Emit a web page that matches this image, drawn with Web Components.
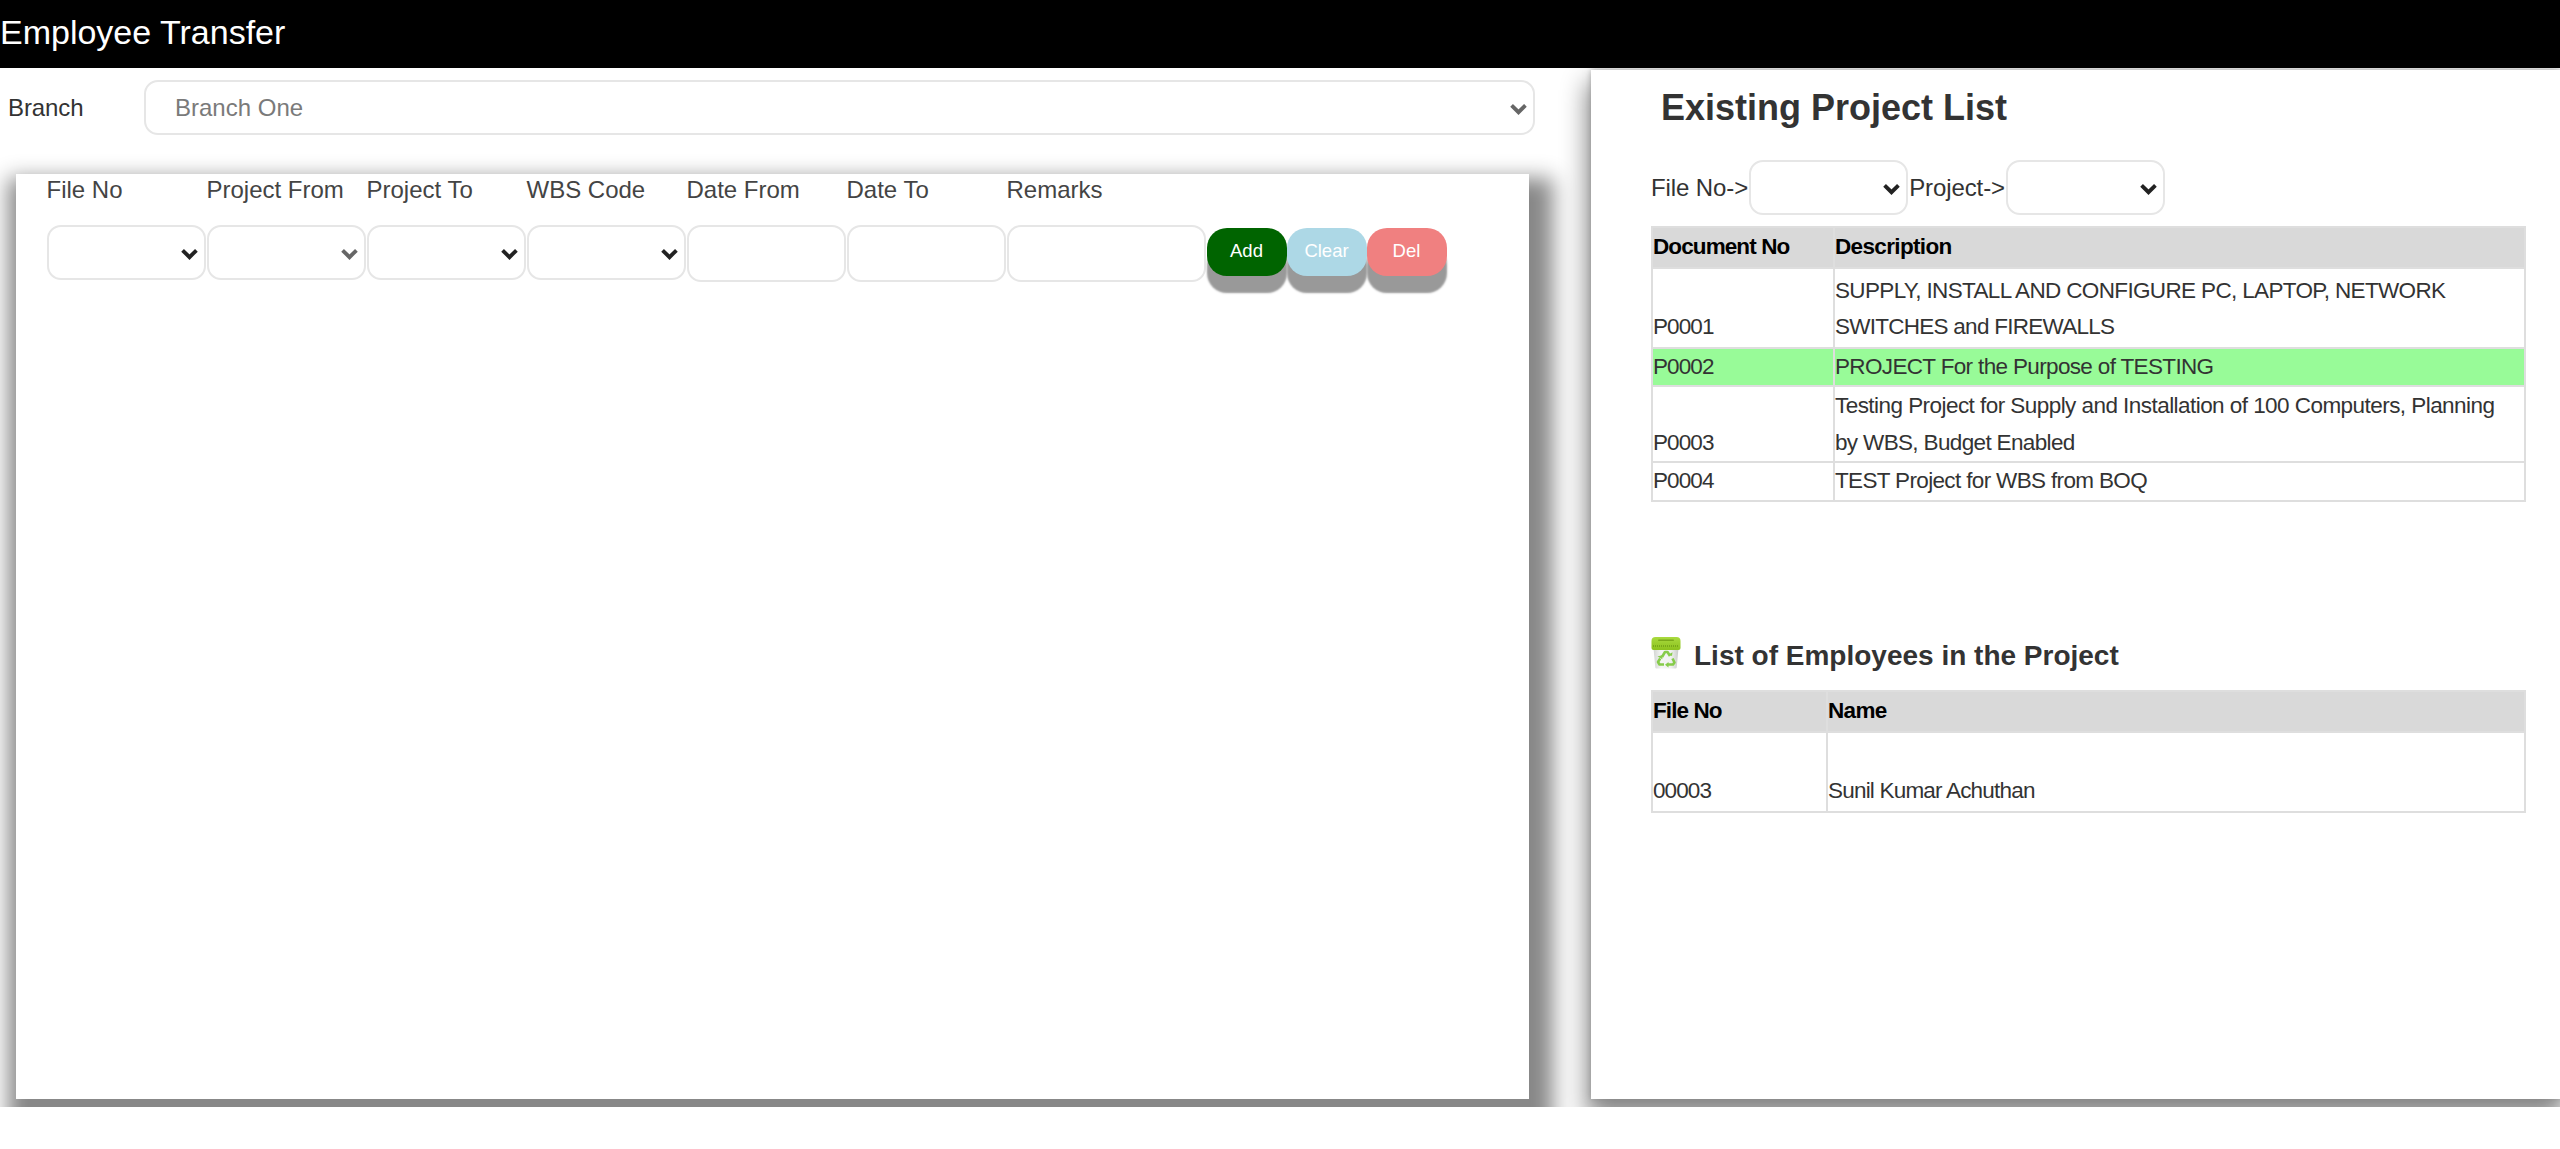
<!DOCTYPE html>
<html><head><meta charset="utf-8"><title>Employee Transfer</title>
<style>
html,body{margin:0;background:#fff}
body{font-family:"Liberation Sans",Arial,sans-serif;color:#333;height:1149px;overflow:hidden}
</style></head><body>
<x-app>
  <x-header slot="header">Employee Transfer</x-header>
  <x-branch slot="left" label="Branch" value="Branch One"></x-branch>
  <x-form slot="left"></x-form>
  <x-projects slot="right"></x-projects>
</x-app>
<template id="t-projects">
<style>
:host{display:block}
h2{margin:16px 0 0 70px;font-size:36px;line-height:44px;font-weight:700;color:#333}
.filter{display:flex;align-items:center;margin:30px 0 11px 60px;font-size:24px;letter-spacing:-.1px;color:#333;height:55px}
.filter x-select{width:159px;height:55px;margin:0 1px 0 1px}
x-table{margin-left:60px}
h3{display:flex;align-items:center;gap:13px;margin:134px 0 21px 60px;height:33px;font-size:28px;font-weight:700;color:#333}
h3 svg{display:block;width:30px;height:33px;flex:none}
h3 span{position:relative;top:3px}
.mid{letter-spacing:-.74px}
.wide{letter-spacing:-.55px}
</style>
<h2>Existing Project List</h2>
<div class="filter">File No-&gt;<x-select></x-select>Project-&gt;<x-select></x-select></div>
<x-table col="182">
  <x-row head style="height:41px"><x-cell>Document No</x-cell><x-cell>Description</x-cell></x-row>
  <x-row style="height:80px"><x-cell>P0001</x-cell><x-cell>SUPPLY, INSTALL AND CONFIGURE PC, LAPTOP, NETWORK<br><span class="mid">SWITCHES and FIREWALLS</span></x-cell></x-row>
  <x-row style="height:38px;background:#98fb98;--pb:0px"><x-cell>P0002</x-cell><x-cell>PROJECT For the Purpose of TESTING</x-cell></x-row>
  <x-row style="height:75px;line-height:37px;--pb:0px"><x-cell>P0003</x-cell><x-cell><span class="wide">Testing Project for Supply and Installation of 100 Computers, Planning</span><br>by WBS, Budget Enabled</x-cell></x-row>
  <x-row style="height:39px;--pb:1px"><x-cell>P0004</x-cell><x-cell>TEST Project for WBS from BOQ</x-cell></x-row>
</x-table>
<h3><svg viewBox="0 0 30 33" aria-hidden="true">
  <defs><linearGradient id="bin" x1="0" x2="1" y1="0" y2="0"><stop offset="0" stop-color="#d2d5d2"/><stop offset=".3" stop-color="#f4f5f4"/><stop offset=".7" stop-color="#f0f1f0"/><stop offset="1" stop-color="#c8cbc8"/></linearGradient>
  <linearGradient id="lid" x1="0" x2="0" y1="0" y2="1"><stop offset="0" stop-color="#a9da3e"/><stop offset="1" stop-color="#8cc21e"/></linearGradient></defs>
  <path d="M2.500 12h25l-1.800 19.500q-.2 1-1.200 1h-19q-1 0-1.200-1z" fill="url(#bin)"/>
  <path d="M.5 5q0-4 4-4h21q4 0 4 4v7q0 2-2 2h-25q-2 0-2-2z" fill="url(#lid)"/>
  <rect x="7" y="3.500" width="16" height="1.500" rx=".75" fill="#7aa81a"/>
  <path d="M2 10h26" stroke="#6f9e16" stroke-opacity=".75" stroke-width="2" stroke-dasharray="1 1"/>
  <g fill="none" stroke="#86cc4a" stroke-width="2.600" stroke-linejoin="round">
    <path d="M11 21l3-5h2.500l2.500 4"/><path d="M21.500 22.500l2 4-1.500 2h-5"/><path d="M13 28.500H8.500l-1.500-2.500 2.200-3.500"/>
  </g>
  <path d="M17.500 18.500l3.500 1.500.5-3.800zM17.500 31.500v-5.500l-3.500 2.800zM6.500 20.500l4.800 2.800.2-4.400z" fill="#86cc4a"/>
</svg><span>List of Employees in the Project</span></h3>
<x-table col="175">
  <x-row head style="height:41px"><x-cell>File No</x-cell><x-cell>Name</x-cell></x-row>
  <x-row style="height:80px"><x-cell>00003</x-cell><x-cell><span style="letter-spacing:-.8px">Sunil Kumar Achuthan</span></x-cell></x-row>
</x-table>
</template>
<script>
const def=(name,html,init)=>customElements.define(name,class extends HTMLElement{
  constructor(){super();this.attachShadow({mode:'open'}).innerHTML=html;}
  connectedCallback(){init&&init.call(this,this.shadowRoot);}
});
def('x-app',`<style>
:host{display:block}
main{display:flex;height:1039px;overflow:hidden;clip-path:inset(-10px 0 0 0)}
.l{width:1591px;flex:none;box-sizing:border-box}
.r{flex:1;margin:2px 0 8px;background:#fff;box-shadow:0 16px 24px 4px #888,0 0 6px rgba(150,150,150,.8)}
</style><slot name="header"></slot><main><div class="l"><slot name="left"></slot></div><div class="r"><slot name="right"></slot></div></main>`);
def('x-header',`<style>
:host{display:block;height:68px;background:#000;color:#fff;font-size:34px;line-height:65px;box-sizing:border-box}
</style><slot></slot>`);
def('x-select',`<style>
:host{display:block;position:relative;box-sizing:border-box}
select{appearance:none;-webkit-appearance:none;display:block;width:100%;height:100%;box-sizing:border-box;margin:0;border:2px solid #e6e6e6;border-radius:14px;background:#fff;font:24px "Liberation Sans",Arial,sans-serif;color:#7a7a7a;padding:0 40px 0 29px;outline:0}
svg{position:absolute;right:8px;top:50%;width:17px;height:12px;margin-top:-5px;pointer-events:none}
</style><select><option></option></select><svg viewBox="0 0 16 11" aria-hidden="true"><path d="M1.500 2L8 8.500 14.500 2" fill="none" stroke-width="3.600"/></svg>`,function(s){
  const v=this.getAttribute('value');if(v)s.querySelector('option').textContent=v;
  s.querySelector('path').setAttribute('stroke',this.hasAttribute('muted')?'#666':'#222');
});
def('x-input',`<style>
:host{display:block}
input{display:block;width:100%;height:100%;box-sizing:border-box;margin:0;border:2px solid #e6e6e6;border-radius:14px;background:#fff;outline:0}
</style><input type="text">`);
def('x-branch',`<style>
:host{display:flex;align-items:center;margin-top:12px;height:55px}
label{width:144px;padding-left:8px;box-sizing:border-box;font-size:24px;letter-spacing:-.1px;color:#333}
x-select{width:1391px;height:55px}
</style><label></label><x-select muted></x-select>`,function(s){
  s.querySelector('label').textContent=this.getAttribute('label');
  const x=s.querySelector('x-select');customElements.upgrade(x);
  x.shadowRoot.querySelector('option').textContent=this.getAttribute('value');
});
def('x-btn',`<style>
:host{display:block;margin-top:3px;height:48px;border-radius:20px;background:var(--c);color:#fff;font-size:18.500px;line-height:46px;text-align:center;box-shadow:0 17px 2px #999}
</style><slot></slot>`);
def('x-form',`<style>
:host{display:block;box-sizing:border-box;margin:39px 0 0 16px;width:1513px;height:925px;background:#fff;padding-left:30.500px;box-shadow:8px 20px 20px 16px #888}
.g{display:grid;grid-template-columns:repeat(6,160px) 200px repeat(3,80px);grid-template-rows:33px 57px;row-gap:18px}
span{font-size:24px;line-height:32px;color:#444;white-space:nowrap}
x-select{width:159px;height:55px}
x-input{width:159px;height:57px}
x-input.w{width:199px}
</style><div class="g">
<span>File No</span><span>Project From</span><span>Project To</span><span>WBS Code</span><span>Date From</span><span>Date To</span><span>Remarks</span><i></i><i></i><i></i>
<x-select></x-select><x-select muted></x-select><x-select></x-select><x-select></x-select><x-input></x-input><x-input></x-input><x-input class="w"></x-input>
<x-btn style="--c:#006400">Add</x-btn><x-btn style="--c:#add8e6">Clear</x-btn><x-btn style="--c:#f08080">Del</x-btn>
</div>`);
def('x-table',`<style>
:host{display:table;border-collapse:collapse;table-layout:fixed;width:873px;font-size:22.500px;letter-spacing:-.65px;line-height:36px;color:#333}
</style><slot></slot>`,function(){
  const c=this.getAttribute('col');this.style.setProperty('--col',c+'px');
});
def('x-row',`<style>
:host{display:table-row}
:host([head]){background:#d9d9d9;color:#000;font-weight:700}
</style><slot></slot>`);
def('x-cell',`<style>
:host{display:table-cell;vertical-align:bottom;border:2px solid #dedede;padding:0 1px var(--pb,2px) 0;box-sizing:border-box}
:host(:first-child){width:var(--col);letter-spacing:-.9px}
</style><slot></slot>`);
def('x-projects',document.getElementById('t-projects').innerHTML);
</script>
</body></html>
